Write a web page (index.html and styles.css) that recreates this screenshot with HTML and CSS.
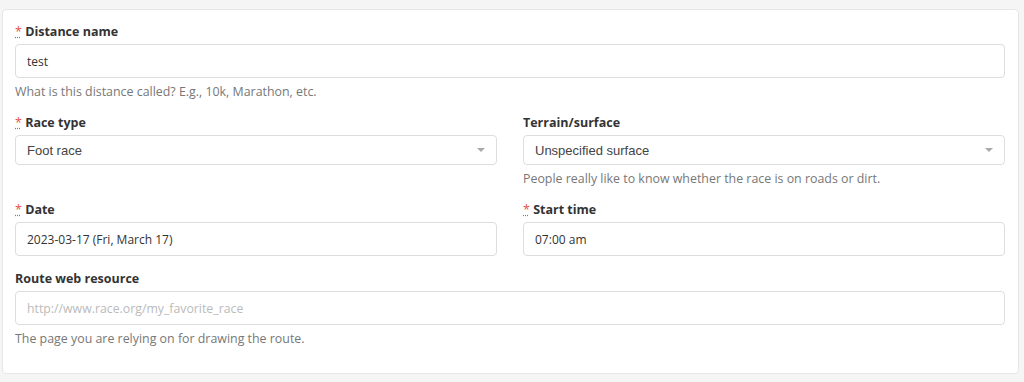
FILE: index.html
```html
<!DOCTYPE html>
<html lang="en">
<head>
    <meta charset="UTF-8">
    <meta name="viewport" content="width=device-width, initial-scale=1.0">
    <title>Distance</title>
    <link rel="stylesheet" href="styles.css">
</head>
<body>

<div class="panel">
    <div class="form-group">
        <label class="label"><abbr class="req" title="required">*</abbr> Distance name</label>
        <input class="input" type="text" value="test">
        <div class="help">What is this distance called? E.g., 10k, Marathon, etc.</div>
    </div>

    <div class="row">
        <div class="form-group">
            <label class="label"><abbr class="req" title="required">*</abbr> Race type</label>
            <div class="select">
                <span>Foot race</span>
                <span class="caret"></span>
            </div>
        </div>
        <div class="form-group">
            <label class="label">Terrain/surface</label>
            <div class="select">
                <span>Unspecified surface</span>
                <span class="caret"></span>
            </div>
            <div class="help">People really like to know whether the race is on roads or dirt.</div>
        </div>
    </div>

    <div class="row">
        <div class="form-group">
            <label class="label"><abbr class="req" title="required">*</abbr> Date</label>
            <input class="input" type="text" value="2023-03-17 (Fri, March 17)">
        </div>
        <div class="form-group">
            <label class="label"><abbr class="req" title="required">*</abbr> Start time</label>
            <input class="input" type="text" value="07:00 am">
        </div>
    </div>

    <div class="form-group">
        <label class="label">Route web resource</label>
        <input class="input" type="text" placeholder="http://www.race.org/my_favorite_race">
        <div class="help">The page you are relying on for drawing the route.</div>
    </div>
</div>

</body>
</html>
```

FILE: styles.css
```css
body {
    font-family: "Open Sans", Arial, sans-serif;
    background-color: #f5f5f5;
    margin: 0;
    padding: 9px 5px 0 2px;
    color: #333;
}
.panel {
    background-color: #fff;
    border: 1px solid #e6e6e6;
    border-radius: 4px;
    padding: 14px 13px 11px 12px;
}
.row {
    display: grid;
    grid-template-columns: 1fr 1fr;
    column-gap: 26px;
}
.form-group {
    margin-bottom: 15px;
}
.label {
    display: block;
    font-size: 12.5px;
    font-weight: 700;
    line-height: 16px;
    margin-bottom: 4px;
    color: #333;
}
.req {
    color: #e5534b;
    text-decoration: underline dotted;
    text-decoration-color: #e5534b;
    font-weight: 400;
    cursor: help;
}
.input {
    display: block;
    box-sizing: border-box;
    width: 100%;
    height: 34px;
    padding: 0 11px;
    font-family: "Open Sans", Arial, sans-serif;
    font-size: 12px;
    color: #333;
    background-color: #fff;
    border: 1px solid #ddd;
    border-radius: 4px;
    outline: none;
}
.input::placeholder {
    color: #bbb;
    font-size: 12.3px;
}
.select {
    display: flex;
    align-items: center;
    justify-content: space-between;
    box-sizing: border-box;
    height: 30px;
    padding: 0 11px;
    font-family: "Liberation Sans", Arial, sans-serif;
    font-size: 13px;
    color: #444;
    border: 1px solid #ddd;
    border-radius: 4px;
    background-color: #fff;
    cursor: pointer;
}
.caret {
    width: 0;
    height: 0;
    border-left: 4px solid transparent;
    border-right: 4px solid transparent;
    border-top: 4px solid #aaa;
}
.help {
    margin-top: 5px;
    font-size: 12.4px;
    line-height: 17px;
    color: #777;
}
```
